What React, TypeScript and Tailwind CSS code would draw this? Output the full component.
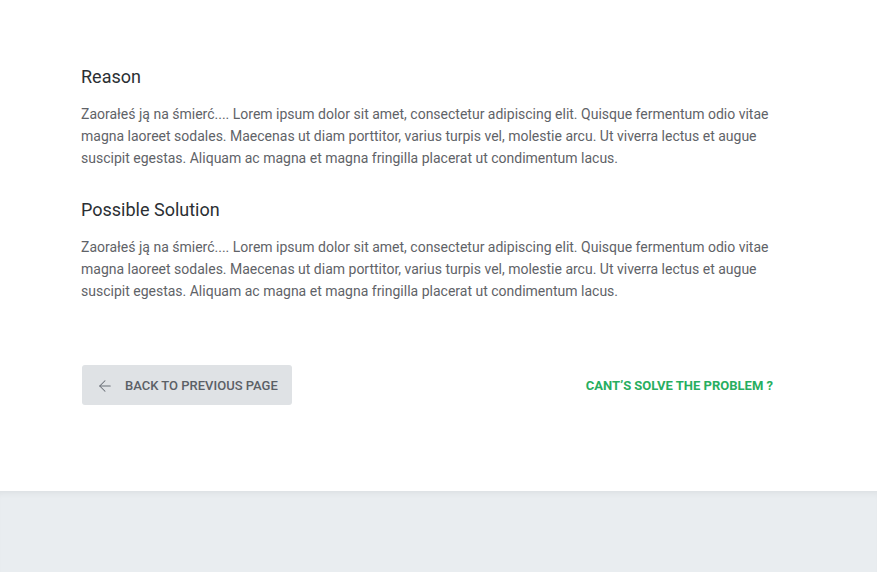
import { ArrowLeft } from 'lucide-react'

const body =
  'Zaorałeś ją na śmierć.... Lorem ipsum dolor sit amet, consectetur adipiscing elit. Quisque fermentum odio vitae magna laoreet sodales. Maecenas ut diam porttitor, varius turpis vel, molestie arcu. Ut viverra lectus et augue suscipit egestas. Aliquam ac magna et magna fringilla placerat ut condimentum lacus.'

export default function App() {
  return (
    <div className="flex h-[572px] flex-col bg-white font-['Roboto',sans-serif]">
      <main className="flex-1 bg-white">
        <div className="w-[696px] pl-[81px] pt-[65px] box-content">
          {/* Reason */}
          <section>
            <h2 className="text-[18px] leading-[24px] text-[#2b2f33]">Reason</h2>
            <p className="mt-[14px] text-[14px] leading-[22px] text-[#5f6368]">{body}</p>
          </section>

          {/* Possible Solution */}
          <section className="mt-[29px]">
            <h2 className="text-[18px] leading-[24px] text-[#2b2f33]">Possible Solution</h2>
            <p className="mt-[14px] text-[14px] leading-[22px] text-[#5f6368]">{body}</p>
          </section>

          <div className="mt-[63px] flex items-center justify-between pr-[4px]">
            <button className="ml-px flex h-[40px] w-[210px] items-center gap-[11px] rounded-[3px] bg-[#dfe2e5] pl-[14px] pt-px text-[13px] font-medium uppercase text-[#5b6066]">
              <ArrowLeft size={18} strokeWidth={1.4} className="text-[#6b7078]" />
              Back to previous page
            </button>
            <a className="pt-[2px] text-[13px] font-bold uppercase text-[#27ae60]">Cant’s solve the problem ?</a>
          </div>
        </div>
      </main>
      <footer className="h-[81px] bg-[#e9edf0] shadow-[inset_0_6px_6px_-4px_rgba(0,0,0,0.06)]" />
    </div>
  )
}
